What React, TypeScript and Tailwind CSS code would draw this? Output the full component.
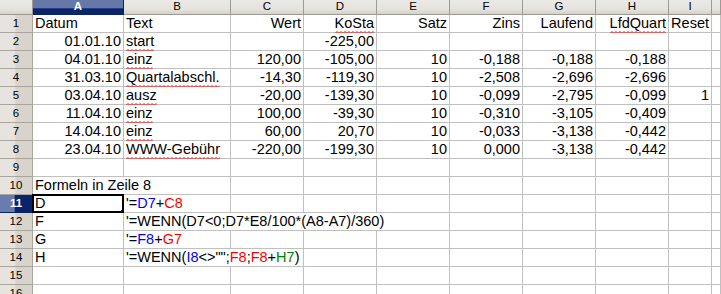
import React from 'react'

type Seg = { t: string; c?: string }
type Cell = {
  v?: string
  segs?: Seg[]
  align?: 'left' | 'right'
  wavy?: boolean
  span?: number
  selected?: boolean
}

const cols = ['A', 'B', 'C', 'D', 'E', 'F', 'G', 'H', 'I', '']

const L = (v: string, wavy = false): Cell => ({ v, align: 'left', wavy })
const R = (v: string, wavy = false): Cell => ({ v, align: 'right', wavy })
const E: Cell = {}

const blue = 'text-[#0000ff]'
const red = 'text-[#ff0000]'
const green = 'text-[#008000]'

const rows: Cell[][] = [
  [L('Datum'), L('Text'), R('Wert'), R('KoSta', true), R('Satz'), R('Zins'), R('Laufend'), R('LfdQuart', true), R('Reset'), E],
  [R('01.01.10'), L('start', true), E, R('-225,00'), E, E, E, E, E, E],
  [R('04.01.10'), L('einz', true), R('120,00'), R('-105,00'), R('10'), R('-0,188'), R('-0,188'), R('-0,188'), E, E],
  [R('31.03.10'), L('Quartalabschl.', true), R('-14,30'), R('-119,30'), R('10'), R('-2,508'), R('-2,696'), R('-2,696'), E, E],
  [R('03.04.10'), L('ausz', true), R('-20,00'), R('-139,30'), R('10'), R('-0,099'), R('-2,795'), R('-0,099'), R('1'), E],
  [R('11.04.10'), L('einz', true), R('100,00'), R('-39,30'), R('10'), R('-0,310'), R('-3,105'), R('-0,409'), E, E],
  [R('14.04.10'), L('einz', true), R('60,00'), R('20,70'), R('10'), R('-0,033'), R('-3,138'), R('-0,442'), E, E],
  [R('23.04.10'), L('WWW-Gebühr', true), R('-220,00'), R('-199,30'), R('10'), R('0,000'), R('-3,138'), R('-0,442'), E, E],
  [E, E, E, E, E, E, E, E, E, E],
  [{ v: 'Formeln in Zeile 8', align: 'left', span: 2 }, E, E, E, E, E, E, E, E],
  [
    { v: 'D', align: 'left', selected: true },
    { segs: [{ t: "'=" }, { t: 'D7', c: blue }, { t: '+' }, { t: 'C8', c: red }] },
    E, E, E, E, E, E, E, E,
  ],
  [
    L('F'),
    { segs: [{ t: "'=WENN(D7<0;D7*E8/100*(A8-A7)/360)" }], span: 4 },
    E, E, E, E, E,
  ],
  [
    L('G'),
    { segs: [{ t: "'=" }, { t: 'F8', c: blue }, { t: '+' }, { t: 'G7', c: red }] },
    E, E, E, E, E, E, E, E,
  ],
  [
    L('H'),
    {
      segs: [
        { t: "'=WENN(" },
        { t: 'I8', c: blue },
        { t: '<>"";' },
        { t: 'F8', c: red },
        { t: ';' },
        { t: 'F8', c: red },
        { t: '+' },
        { t: 'H7', c: green },
        { t: ')' },
      ],
      span: 2,
    },
    E, E, E, E, E, E, E,
  ],
  [E, E, E, E, E, E, E, E, E, E],
  [E, E, E, E, E, E, E, E, E, E],
]

const spanClass: Record<number, string> = { 1: '', 2: 'col-span-2', 3: 'col-span-3', 4: 'col-span-4' }

// red spell-check squiggle under a word
function Wavy({ children }: { children: React.ReactNode }) {
  return (
    <span className="relative inline-block">
      {children}
      <svg className="absolute left-0 -bottom-[2px] h-[3px] w-full overflow-hidden" preserveAspectRatio="none">
        <defs>
          <pattern id="sq" width="4" height="3" patternUnits="userSpaceOnUse">
            <path d="M0 2.5 L2 0.5 L4 2.5" fill="none" stroke="#ff0000" strokeWidth="1" />
          </pattern>
        </defs>
        <rect width="100%" height="3" fill="url(#sq)" />
      </svg>
    </span>
  )
}

function DataCell({ cell }: { cell: Cell }) {
  return (
    <div
      className={`relative flex items-center border-r border-b border-[#c0c0c0] bg-white px-[2px] text-[14.5px] leading-[17px] text-black whitespace-nowrap overflow-visible ${
        spanClass[cell.span ?? 1]
      } ${cell.align === 'right' ? 'justify-end' : 'justify-start'}`}
    >
      {cell.v && (cell.wavy ? <Wavy>{cell.v}</Wavy> : <span>{cell.v}</span>)}
      {cell.segs && (
        <span>
          {cell.segs.map((s, i) => (
            <span key={i} className={s.c ?? ''}>
              {s.t}
            </span>
          ))}
        </span>
      )}
      {cell.selected && (
        <>
          <div className="pointer-events-none absolute -top-px -left-px -right-px -bottom-px border-2 border-black" />
          <div className="absolute -right-[3px] -bottom-[3px] h-[5px] w-[5px] bg-black" />
        </>
      )}
    </div>
  )
}

export default function App() {
  return (
    <div
      className="h-[294px] w-[721px] overflow-hidden bg-white"
      style={{ fontFamily: '"Liberation Sans", Arial, sans-serif' }}
    >
      <div className="grid grid-cols-[33px_91px_107px_73px_73px_73px_73px_73px_73px_43px_1fr] grid-rows-[15px_repeat(16,18px)]">
        {/* column header */}
        <div className="border-r border-b border-[#9d9a93] bg-[linear-gradient(to_bottom,#ebe9e5_0%,#e6e3de_65%,#d6d2ca_100%)]" />
        {cols.map((c, i) =>
          i === 0 ? (
            <div
              key={c}
              className="flex items-center justify-center border-r border-b border-[#0a246a] bg-[linear-gradient(to_bottom,#6678aa_0%,#6678aa_58%,#0a246a_62%,#0a246a_100%)] text-[11.5px] font-bold leading-none text-white"
            >
              {c}
            </div>
          ) : (
            <div
              key={i}
              className="flex items-center justify-center border-r border-b border-[#9d9a93] bg-[linear-gradient(to_bottom,#ebe9e5_0%,#e6e3de_65%,#d6d2ca_100%)] text-[11.5px] leading-none text-black"
            >
              {c}
            </div>
          )
        )}

        {rows.map((row, r) => {
          const sel = r === 10
          return (
            <React.Fragment key={r}>
              <div
                className={`flex items-center justify-center border-r border-b text-[11.5px] leading-none ${
                  sel
                    ? 'border-[#0a246a] bg-[linear-gradient(to_right,#6a7cae_0%,#6a7cae_44%,#0a246a_48%,#0a246a_100%)] font-bold text-white'
                    : 'border-[#a8a59e] bg-[linear-gradient(to_right,#e7e4df_0%,#e7e4df_45%,#d8d4cc_50%,#d8d4cc_100%)] text-black'
                }`}
              >
                {r + 1}
              </div>
              {row.map((cell, i) => (
                <DataCell key={i} cell={cell} />
              ))}
            </React.Fragment>
          )
        })}
      </div>
    </div>
  )
}
